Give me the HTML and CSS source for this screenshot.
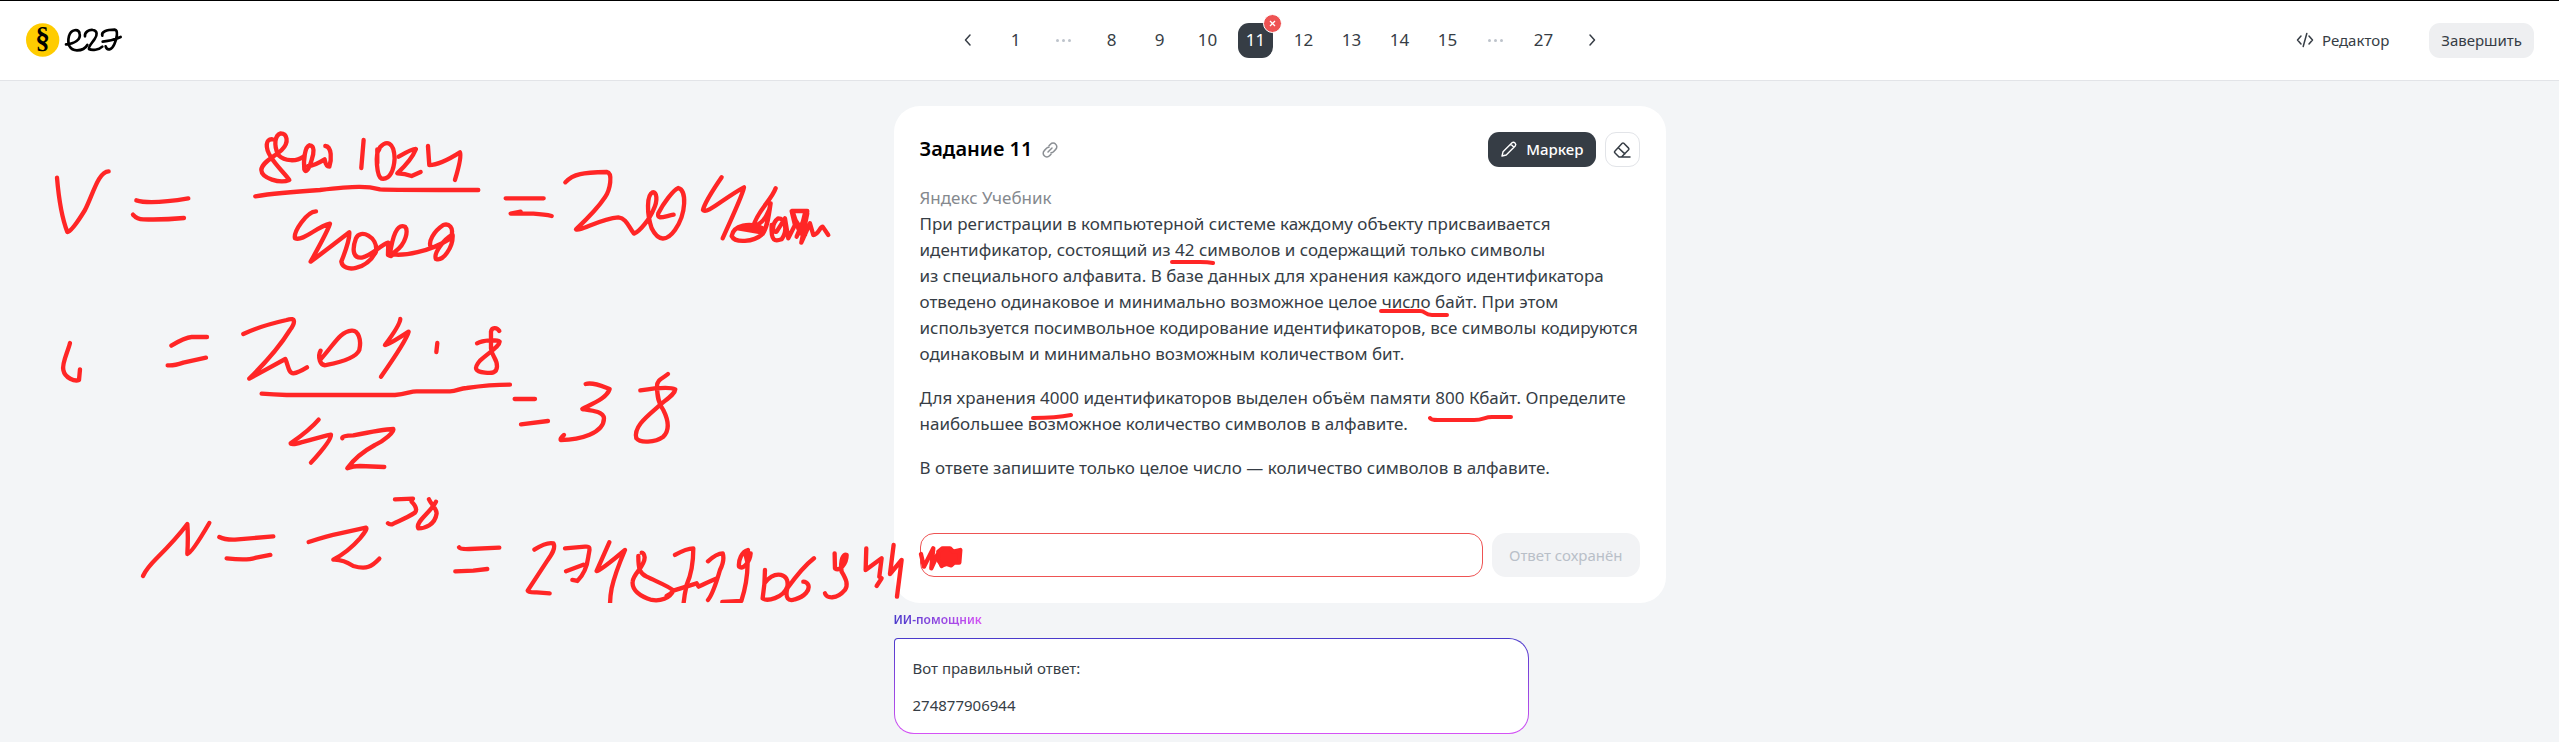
FILE: index.html
```
<!DOCTYPE html>
<html lang="ru">
<head>
<meta charset="utf-8">
<meta name="viewport" content="width=device-width, initial-scale=1">
<title>Задание 11</title>
<link rel="stylesheet" href="styles.css">
</head>
<body>
<header class="topbar">
  <a class="logo" href="#" aria-label="ЕГЭ">
    <svg width="100" height="36" viewBox="0 0 300 108" aria-hidden="true">
      <circle cx="53" cy="54" r="50" fill="#ffcc00"/>
      <text class="logo-sign" x="53" y="77" text-anchor="middle">§</text>
      <g class="logo-script">
        <path d="M123 67C149 65 168 53 164 35C161 19 138 21 132 42C126 66 134 85 156 85C172 85 182 78 187 69"/>
        <path d="M180 43C178 31 192 22 204 24C218 26 217 40 209 51C201 63 189 75 192 81C200 86 222 84 232 74"/>
        <path d="M232 41C228 29 244 23 269 23C281 25 275 51 268 67C260 85 246 87 242 73M233 59C254 57 274 51 287 45"/>
      </g>
    </svg>
  </a>
  <nav class="pager" aria-label="Задания">
    <button class="page" type="button" aria-label="Назад"><svg width="16" height="16" viewBox="0 0 16 16" class="stroke"><path d="M10 3 5.500 8 10 13"/></svg></button>
    <button class="page" type="button">1</button>
    <span class="dots"><i></i><i></i><i></i></span>
    <button class="page" type="button">8</button>
    <button class="page" type="button">9</button>
    <button class="page" type="button">10</button>
    <button class="page current" type="button" aria-current="page">11<span class="badge"><svg width="7" height="7" viewBox="0 0 7 7"><path d="M1 1 6 6M6 1 1 6"/></svg></span></button>
    <button class="page" type="button">12</button>
    <button class="page" type="button">13</button>
    <button class="page" type="button">14</button>
    <button class="page" type="button">15</button>
    <span class="dots"><i></i><i></i><i></i></span>
    <button class="page" type="button">27</button>
    <button class="page" type="button" aria-label="Вперёд"><svg width="16" height="16" viewBox="0 0 16 16" class="stroke"><path d="M6 3 10.500 8 6 13"/></svg></button>
  </nav>
  <div class="actions">
    <button class="editor" type="button"><svg width="18" height="18" viewBox="0 0 18 18" class="stroke"><path d="M5 5 1.500 9 5 13M13 5 16.500 9 13 13M10.800 2.500 7.200 15.500"/></svg>Редактор</button>
    <button class="finish" type="button">Завершить</button>
  </div>
</header>

<main>
  <div class="workspace">
    <section class="task">
      <div class="task-head">
        <h1>Задание 11</h1>
        <a class="link" href="#" aria-label="Ссылка на задание"><svg width="18" height="18" viewBox="0 0 18 18"><path d="M8 4.800 9.500 3.200a3.600 3.600 0 0 1 5.200 0a3.600 3.600 0 0 1 0 5.200L12.500 10.700a3.600 3.600 0 0 1-2.500 1M10 13.200 8.500 14.800a3.600 3.600 0 0 1-5.200 0a3.600 3.600 0 0 1 0-5.200L5.500 7.300a3.600 3.600 0 0 1 2.500-1M7 11 11 7"/></svg></a>
        <button class="marker" type="button"><svg width="18" height="18" viewBox="0 0 18 18"><path d="M2 16 3 11.800 12 2.800Q13.500 1.500 15 3T15.200 6L6.200 15 2 16ZM10.700 4.100 13.900 7.300"/></svg>Маркер</button>
        <button class="eraser" type="button" aria-label="Ластик"><svg width="20" height="20" viewBox="0 0 20 20" class="stroke"><path d="M7 17 2.800 12.800Q2 12 2.800 11.200L10.200 3.300Q11 2.600 11.800 3.300L16.600 8.100Q17.300 9 16.600 9.800L9.500 17ZM6.300 7.700 12.800 13.900M9.500 17H18"/></svg></button>
      </div>
      <div class="task-text">
        <div class="source">Яндекс Учебник</div>
        <p>При регистрации в компьютерной системе каждому объекту присваивается идентификатор, состоящий из&nbsp;42&nbsp;символов и&nbsp;содержащий только символы из&nbsp;специального алфавита. В&nbsp;базе данных для хранения каждого идентификатора отведено одинаковое и&nbsp;минимально возможное целое число байт. При этом используется посимвольное кодирование идентификаторов, все символы кодируются одинаковым и&nbsp;минимально возможным количеством бит.</p>
        <p>Для хранения 4000 идентификаторов выделен объём памяти 800&nbsp;Кбайт. Определите наибольшее возможное количество символов в&nbsp;алфавите.</p>
        <p>В&nbsp;ответе запишите только целое число — количество символов в&nbsp;алфавите.</p>
      </div>
      <form class="answer">
        <input type="text" aria-label="Ответ">
        <button type="button" disabled>Ответ сохранён</button>
      </form>
    </section>

    <svg class="ink" aria-hidden="true">
      <g transform="translate(0 -81)">
        <g transform="translate(30 110) scale(.3333)">
          <path d="M81 203Q90 310 112 366Q125 365 165 300C190 250 205 185 236 184"/>
          <path d="M319 271Q360 284 475 265M309 314Q322 328 340 328Q400 330 462 324"/>
          <path d="M728 88C705 85 706 115 722 140C740 170 765 190 778 210C750 222 695 205 694 180C696 155 735 140 755 120C780 95 770 70 752 70C735 75 730 105 745 135C765 155 800 155 820 140"/>
          <path d="M838 106C825 110 820 150 823 178C828 192 838 175 845 150C852 130 855 105 838 106M835 168Q852 168 884 148Q888 170 898 170C905 150 906 110 886 108"/>
          <path d="M1001 90 994 174M1048 118C1035 130 1040 200 1055 206C1080 210 1092 180 1094 145C1092 95 1070 90 1050 112M1042 118V160"/>
          <path d="M1106 140Q1150 115 1158 117Q1145 150 1102 190Q1125 190 1145 198L1172 186M1194 108 1198 165Q1230 165 1290 127Q1296 140 1275 210"/>
          <path d="M676 259Q740 248 870 240C980 228 1010 228 1050 238Q1080 240 1345 240"/>
          <path d="M858 304C830 305 790 365 795 385C820 395 860 350 900 341Q895 360 842 455Q870 435 958 367Q960 390 934 455C940 490 1010 480 1038 425C1045 380 990 355 978 385C965 420 970 445 995 443C1030 435 1050 405 1075 398L1074 435C1090 445 1085 430 1095 425C1130 400 1135 360 1125 350C1100 340 1088 380 1080 432C1120 440 1200 425 1262 385C1275 350 1255 340 1240 345C1210 365 1195 395 1202 410M1266 375C1240 390 1210 430 1218 447C1240 455 1270 410 1268 375"/>
        </g>
        <g transform="translate(460 110) scale(.3333)">
          <path d="M137 265H251M182 305 152 311H220Q255 313 275 318"/>
          <path d="M316 217C340 190 370 188 440 186C460 190 450 240 435 262Q410 300 348 358C360 365 420 326 475 322C500 325 505 350 522 371C540 365 570 325 580 300C595 270 590 245 578 247C560 255 560 310 575 355C595 395 620 395 645 360C680 310 680 240 655 234C640 240 610 280 595 310C590 330 610 320 641 314"/>
          <path d="M785 202Q735 275 729 300C740 315 790 265 852 232Q850 250 788 385"/>
          <path d="M947 235C935 270 890 305 880 350C915 340 930 300 932 280C925 330 920 355 908 372C880 397 825 400 815 378C820 345 870 335 908 355L835 355 905 367"/>
          <path d="M935 345C932 395 945 395 965 388C985 360 975 325 955 325C935 340 935 370 950 365L975 325 985 385 1005 345 995 303H1042L1010 380 1042 310 1024 398 1050 340 1060 375C1075 375 1080 350 1088 350L1105 375M1000 310 1020 370 1035 310 1030 375M1000 320 1035 375"/>
        </g>
        <g transform="translate(30 290) scale(.3333)">
          <path d="M120 159C112 190 95 220 100 240C105 265 135 275 147 270L150 238"/>
          <path d="M424 167Q465 142 485 141H531M413 226Q430 228 460 218L528 203"/>
          <path d="M640 132Q690 108 770 90C800 80 795 100 780 120Q740 185 658 266L766 207C775 225 775 250 790 250Q805 248 831 232"/>
          <path d="M872 182C862 200 870 230 890 225C940 215 980 200 988 180C995 150 985 120 965 122C930 125 915 160 872 208"/>
          <path d="M1111 87Q1110 105 1065 165Q1075 165 1136 125Q1130 150 1053 260"/>
          <path d="M695 311Q730 314 770 315H1095C1130 313 1140 304 1160 304H1260C1280 304 1290 295 1310 294Q1380 284 1440 284"/>
          <path d="M866 389Q840 420 782 460C785 470 850 445 903 434Q905 450 843 518M937 445Q935 437 970 436Q1060 418 1090 417C1095 425 1060 455 1035 465Q980 495 952 535Q970 528 990 528L1063 531"/>
        </g>
        <g transform="translate(400 290) scale(.3333)">
          <path d="M112 159 109 186"/>
          <path d="M298 123C290 110 275 112 273 125V175C275 200 292 205 291 230C290 250 275 250 255 248C225 245 220 235 240 212C270 185 298 170 299 155C290 148 250 150 231 160"/>
          <path d="M344 327H405M363 403 444 393"/>
          <path d="M557 282C580 275 610 290 629 297C620 325 580 340 547 357C580 362 610 365 612 385C612 430 540 450 482 450Q480 445 492 435"/>
          <path d="M804 252C790 265 770 268 771 290C772 320 775 340 790 360C805 390 810 420 790 440C765 458 720 460 709 445C700 410 740 380 780 345C810 320 825 310 826 298C810 290 760 295 721 301"/>
        </g>
        <g transform="translate(110 470) scale(.3333)">
          <path d="M99 318Q110 295 140 265Q200 205 232 162Q235 200 232 252Q245 250 298 159"/>
          <path d="M328 201Q345 210 375 209L490 199M350 265Q410 272 435 264L481 255"/>
          <path d="M596 216Q650 198 690 190L768 173Q775 175 750 205Q715 245 670 269C690 268 710 275 730 288C770 300 785 290 808 266"/>
          <path d="M855 88 909 86Q903 93 905 95Q925 115 915 128C890 145 860 155 846 163Q838 164 834 160M957 88C965 105 980 115 980 130C975 165 945 175 925 175C915 155 960 130 978 95"/>
          <path d="M1047 232Q1050 238 1080 237L1168 233M1036 304 1090 302 1132 297"/>
        </g>
        <g transform="translate(500 470) scale(.3333)">
          <path d="M103 239Q140 215 160 220C170 235 150 260 140 275L83 362Q85 368 110 367L149 370"/>
          <path d="M195 235 255 230C275 228 268 240 265 260C260 300 240 325 232 333L217 330M198 304 250 284"/>
          <path d="M328 217 290 303Q300 303 375 240Q345 310 335 355Q330 380 330 410"/>
          <path d="M415 258C415 300 420 310 440 320C470 335 510 350 520 362C510 385 480 395 455 390C420 380 395 360 398 335C400 310 435 290 434 262Q432 248 425 248M500 378Q515 370 520 362L590 340 596 350Q615 340 648 326"/>
          <path d="M525 255Q560 235 580 235Q580 300 560 345Q552 380 550 410M624 274Q650 250 668 250Q675 270 660 300Q640 370 624 390"/>
          <path d="M744 240C725 245 715 270 717 290C730 300 750 275 752 250L737 255 743 280Q742 340 724 393L667 396"/>
          <path d="M795 300Q795 340 788 385C800 395 850 385 862 350C870 310 825 300 795 338M942 265C910 290 880 330 862 355C855 385 865 395 885 388C915 380 930 360 925 345Q920 335 910 335"/>
          <path d="M1004 250 1005 295C1020 305 1040 280 1040 255C1030 250 1020 270 1025 305C1040 330 1045 345 1035 360C1010 390 980 385 975 370"/>
          <path d="M1099 235 1097 300 1145 265 1138 320 1145 325 1130 348M1181 225 1170 312 1205 270 1191 380"/>
          <path d="M1263 252 1272 290 1300 235 1294 295 1312 255 1325 288"/>
          <path class="blot" d="M1315 245 1328 235 1350 235 1360 245 1381 240 1378 278 1362 278 1354 286 1340 282 1326 286 1316 272Z"/>
        </g>
        <g class="fine">
          <path d="M1172 262H1200Q1208 262 1213 263M1381 311H1420C1426 311 1424 315 1432 315H1447M1033 418Q1056 418 1071 415M1430 418Q1431 420 1438 420H1474C1484 420 1484 417 1492 417H1511"/>
        </g>
      </g>
    </svg>
  </div>

  <section class="helper">
    <h2>ИИ-помощник</h2>
    <div class="reply">
      <p>Вот правильный ответ:</p>
      <p>274877906944</p>
    </div>
  </section>
</main>
</body>
</html>
```
FILE: styles.css
```
* { box-sizing: border-box; }

body {
  margin: 0;
  background: #f3f5f7;
  color: #363d45;
  font-family: "Noto Sans", "Open Sans", sans-serif;
  font-size: 16px;
}

h1, h2, p { margin: 0; }

button {
  border: 0;
  padding: 0;
  background: none;
  color: inherit;
  font: inherit;
  display: flex;
  align-items: center;
  justify-content: center;
}

svg { display: block; }

.stroke {
  fill: none;
  stroke: #363d45;
  stroke-width: 1.5;
  stroke-linecap: round;
  stroke-linejoin: round;
}

.topbar {
  display: grid;
  grid-template-columns: 1fr auto 1fr;
  align-items: center;
  height: 81px;
  padding: 0 25px 1px;
  background: #fff;
  border-top: 1px solid #000;
  border-bottom: 1px solid #e2e4e8;
}

.logo { justify-self: start; }
.logo-sign { font: bold 88px "Liberation Serif", serif; }
.logo-script {
  fill: none;
  stroke: #000;
  stroke-width: 8;
  stroke-linecap: round;
}

.pager { display: flex; gap: 13px; }

.page, .dots {
  position: relative;
  width: 35px;
  height: 35px;
  border-radius: 11px;
  font-size: 17px;
  line-height: 24px;
}
.page { padding-bottom: 1px; }

.current { background: #363d45; color: #fff; }

.badge {
  position: absolute;
  top: -9px;
  right: -9px;
  display: grid;
  place-items: center;
  width: 19px;
  height: 19px;
  border: 1px solid #fff;
  border-radius: 50%;
  background: #ee5353;
}
.badge path { stroke: #fff; stroke-width: 1.3; }

.dots { display: flex; align-items: center; justify-content: center; gap: 3px; }
.dots i { width: 3px; height: 3px; border-radius: 50%; background: #bdc3cb; }

.actions {
  display: flex;
  justify-self: end;
  align-items: center;
  gap: 40px;
  font-size: 15px;
  line-height: 20px;
}
.editor { gap: 8px; }
.finish {
  height: 35px;
  padding: 0 12px 1px;
  border-radius: 11px;
  background: #eeeff1;
}

.workspace { position: relative; padding-top: 25px; }

.task, .helper { width: 100%; max-width: 772px; margin: 0 auto; }

.task {
  padding: 26px;
  border-radius: 26px;
  background: #fff;
}

.task-head { display: flex; align-items: center; gap: 9px; height: 35px; }
.task-head h1 {
  padding-bottom: 2px;
  color: #000;
  font-size: 20px;
  font-weight: 600;
  line-height: 26px;
}
.link { margin-right: auto; }
.link path { fill: none; stroke: #8b8f94; stroke-width: 1.5; stroke-linecap: round; }

.marker {
  height: 35px;
  padding: 0 12px 1px;
  gap: 8px;
  border-radius: 11px;
  background: #363d45;
  color: #fff;
  font-size: 15px;
  font-weight: 500;
}
.marker path { fill: none; stroke: #fff; stroke-width: 1.4; stroke-linejoin: round; }

.eraser {
  width: 35px;
  height: 35px;
  border: 1px solid #e2e4e8;
  border-radius: 11px;
}

.task-text {
  margin-top: 18px;
  font-size: 17px;
  line-height: 26px;
}
.task-text p { margin-bottom: 18px; }
.source { color: #85898e; }

.answer { display: flex; gap: 9px; margin-top: 52px; }
.answer input {
  flex: 1;
  min-width: 0;
  height: 44px;
  padding: 0 13px;
  border: 1px solid #ee5353;
  border-radius: 14px;
  background: #fff;
  font: inherit;
}
.answer button {
  height: 44px;
  padding: 0 17px;
  border-radius: 14px;
  background: #f2f3f5;
  color: #b9bfc8;
  font-size: 15px;
}

.ink {
  position: absolute;
  inset: 0;
  width: 100%;
  height: 100%;
  pointer-events: none;
}
.ink path {
  fill: none;
  stroke: #ff2626;
  stroke-width: 13;
  stroke-linecap: round;
  stroke-linejoin: round;
}
.ink .fine path { stroke-width: 4; }
.ink .blot { fill: #ff2626; }

.helper { padding: 8px 0; }
.helper h2 {
  width: max-content;
  background: linear-gradient(90deg, #4a3acb, #d553f5);
  background-clip: text;
  color: transparent;
  font-size: 12px;
  font-weight: 600;
  line-height: 18px;
}
.reply {
  display: grid;
  gap: 15px;
  max-width: 635px;
  margin-top: 9px;
  padding: 18px 18px 17px;
  border: 1px solid transparent;
  border-radius: 4px 20px 20px 20px;
  background: linear-gradient(#fff, #fff) padding-box, linear-gradient(#4a3acb, #d553f5) border-box;
  font-size: 15px;
  line-height: 22px;
}
```
